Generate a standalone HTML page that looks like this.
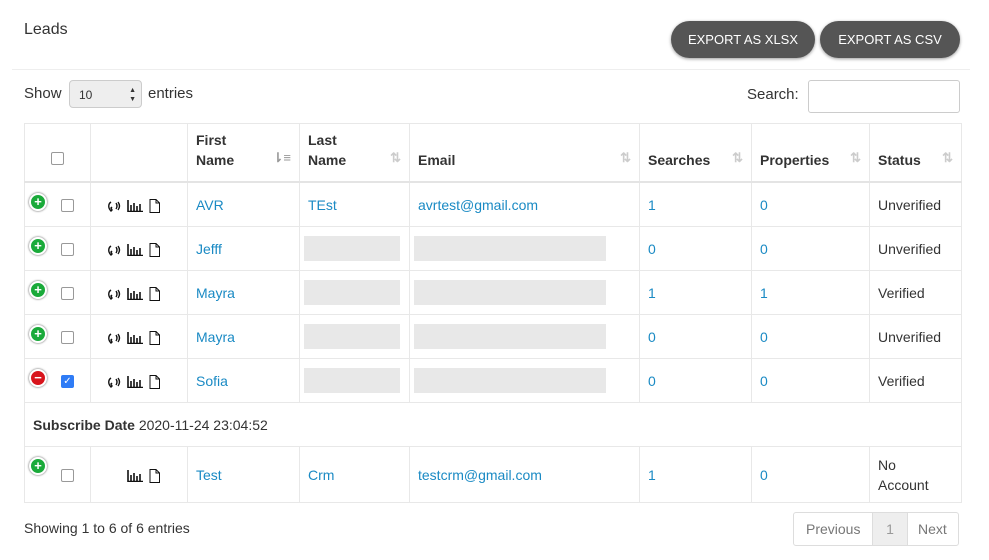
<!DOCTYPE html>
<html><head><style>
body{margin:0;background:#fff;font-family:"Liberation Sans",Arial,sans-serif;color:#333;width:989px;height:560px;overflow:hidden;position:relative}
.a{position:absolute}
.btn{position:absolute;top:21px;height:37px;border-radius:19px;background:#555;color:#fff;font-size:13px;line-height:37px;text-align:center;box-shadow:0 1px 3px rgba(0,0,0,.4)}
table{position:absolute;left:24px;top:123px;border-collapse:collapse;table-layout:fixed;font-size:14px}
td,th{border:1px solid #e8e8e8;padding:0 8px;vertical-align:middle;text-align:left}
th{font-weight:bold;color:#333;height:43px;padding-bottom:11px;vertical-align:bottom;line-height:20px;border-bottom:2px solid #e4e4e4;position:relative}
td{height:43px}
a{color:#1a8ac4;text-decoration:none}
.cb{display:inline-block;width:11px;height:11px;border:1px solid #999;border-radius:2px;background:#fff;vertical-align:middle}
.cbk{background:#2f7cf6;border-color:#2f7cf6;color:#fff;font-size:10px;line-height:11px;text-align:center}
.pl{position:absolute;left:4px;top:10px;width:14px;height:14px;border-radius:50%;border:2px solid #fff;box-shadow:0 0 2px #555;color:#fff;font-size:13px;line-height:13px;text-align:center;font-weight:bold}
.g{background:#1aaa3a}.r{background:#d8141c}
.gr{display:inline-block;background:#e8e8e8;height:25px;vertical-align:middle}
.srt{position:absolute;right:8px;bottom:13px;color:#ccc;font-size:13px}
svg{vertical-align:middle;margin-right:6px}
</style></head><body>
<div class="a" style="left:24px;top:21px;font-size:16px">Leads</div>
<div class="btn" style="left:671px;width:144px">EXPORT AS XLSX</div>
<div class="btn" style="left:820px;width:140px">EXPORT AS CSV</div>
<div class="a" style="left:12px;top:69px;width:958px;border-top:1px solid #eee"></div>
<div class="a" style="left:24px;top:85px;font-size:15px">Show</div>
<div class="a" style="left:69px;top:80px;width:73px;height:28px;border:1px solid #ccc;border-radius:4px;background:#eee;font-size:12px;line-height:28px;box-sizing:border-box;padding-left:9px">10<span style="position:absolute;right:5px;top:0;font-size:7px;line-height:9px;padding-top:5px">&#9650;<br>&#9660;</span></div>
<div class="a" style="left:148px;top:85px;font-size:15px">entries</div>
<div class="a" style="left:747px;top:86px;font-size:15px">Search:</div>
<div class="a" style="left:808px;top:80px;width:152px;height:33px;border:1px solid #ccc;border-radius:3px;box-sizing:border-box"></div>
<table>
<colgroup><col style="width:66px"><col style="width:97px"><col style="width:112px"><col style="width:110px"><col style="width:230px"><col style="width:112px"><col style="width:118px"><col style="width:92px"></colgroup>
<tr><th style="text-align:center;padding-bottom:14px"><span class="cb"></span></th><th></th><th>First<br>Name<span class="srt" style="color:#999">⇂≡</span></th><th>Last<br>Name<span class="srt">⇅</span></th><th>Email<span class="srt">⇅</span></th><th>Searches<span class="srt">⇅</span></th><th>Properties<span class="srt">⇅</span></th><th>Status<span class="srt">⇅</span></th></tr>
<tr><td style="position:relative;padding-left:36px"><span class="pl g">+</span><span class="cb"></span></td><td style="padding-left:16px"><svg width="14" height="12"><path d="M4 2c-3 2-3 6 0 9l1-1-1-2 1-1M9 3q2 3 0 6M11 2q3 4 0 8" stroke="#111" fill="none" stroke-width="1.4"/></svg><svg width="16" height="12"><path d="M1 0v11.5h15M4 5v6M7 3v8M10 6v5M13 4v7" stroke="#111" stroke-width="1.6" fill="none"/></svg><svg width="11" height="14"><path d="M1 .5h6l3.5 3.5v9.5h-9.5zM7 .5v3.5h3.5" stroke="#111" fill="none"/></svg></td><td><a>AVR</a></td><td><a>TEst</a></td><td><a>avrtest@gmail.com</a></td><td><a>1</a></td><td><a>0</a></td><td>Unverified</td></tr>
<tr><td style="position:relative;padding-left:36px"><span class="pl g">+</span><span class="cb"></span></td><td style="padding-left:16px"><svg width="14" height="12"><path d="M4 2c-3 2-3 6 0 9l1-1-1-2 1-1M9 3q2 3 0 6M11 2q3 4 0 8" stroke="#111" fill="none" stroke-width="1.4"/></svg><svg width="16" height="12"><path d="M1 0v11.5h15M4 5v6M7 3v8M10 6v5M13 4v7" stroke="#111" stroke-width="1.6" fill="none"/></svg><svg width="11" height="14"><path d="M1 .5h6l3.5 3.5v9.5h-9.5zM7 .5v3.5h3.5" stroke="#111" fill="none"/></svg></td><td><a>Jefff</a></td><td style="padding:0 4px"><span class="gr" style="width:96px"></span></td><td style="padding:0 4px"><span class="gr" style="width:192px"></span></td><td><a>0</a></td><td><a>0</a></td><td>Unverified</td></tr>
<tr><td style="position:relative;padding-left:36px"><span class="pl g">+</span><span class="cb"></span></td><td style="padding-left:16px"><svg width="14" height="12"><path d="M4 2c-3 2-3 6 0 9l1-1-1-2 1-1M9 3q2 3 0 6M11 2q3 4 0 8" stroke="#111" fill="none" stroke-width="1.4"/></svg><svg width="16" height="12"><path d="M1 0v11.5h15M4 5v6M7 3v8M10 6v5M13 4v7" stroke="#111" stroke-width="1.6" fill="none"/></svg><svg width="11" height="14"><path d="M1 .5h6l3.5 3.5v9.5h-9.5zM7 .5v3.5h3.5" stroke="#111" fill="none"/></svg></td><td><a>Mayra</a></td><td style="padding:0 4px"><span class="gr" style="width:96px"></span></td><td style="padding:0 4px"><span class="gr" style="width:192px"></span></td><td><a>1</a></td><td><a>1</a></td><td>Verified</td></tr>
<tr><td style="position:relative;padding-left:36px"><span class="pl g">+</span><span class="cb"></span></td><td style="padding-left:16px"><svg width="14" height="12"><path d="M4 2c-3 2-3 6 0 9l1-1-1-2 1-1M9 3q2 3 0 6M11 2q3 4 0 8" stroke="#111" fill="none" stroke-width="1.4"/></svg><svg width="16" height="12"><path d="M1 0v11.5h15M4 5v6M7 3v8M10 6v5M13 4v7" stroke="#111" stroke-width="1.6" fill="none"/></svg><svg width="11" height="14"><path d="M1 .5h6l3.5 3.5v9.5h-9.5zM7 .5v3.5h3.5" stroke="#111" fill="none"/></svg></td><td><a>Mayra</a></td><td style="padding:0 4px"><span class="gr" style="width:96px"></span></td><td style="padding:0 4px"><span class="gr" style="width:192px"></span></td><td><a>0</a></td><td><a>0</a></td><td>Unverified</td></tr>
<tr><td style="position:relative;padding-left:36px"><span class="pl r">−</span><span class="cb cbk">✓</span></td><td style="padding-left:16px"><svg width="14" height="12"><path d="M4 2c-3 2-3 6 0 9l1-1-1-2 1-1M9 3q2 3 0 6M11 2q3 4 0 8" stroke="#111" fill="none" stroke-width="1.4"/></svg><svg width="16" height="12"><path d="M1 0v11.5h15M4 5v6M7 3v8M10 6v5M13 4v7" stroke="#111" stroke-width="1.6" fill="none"/></svg><svg width="11" height="14"><path d="M1 .5h6l3.5 3.5v9.5h-9.5zM7 .5v3.5h3.5" stroke="#111" fill="none"/></svg></td><td><a>Sofia</a></td><td style="padding:0 4px"><span class="gr" style="width:96px"></span></td><td style="padding:0 4px"><span class="gr" style="width:192px"></span></td><td><a>0</a></td><td><a>0</a></td><td>Verified</td></tr>
<tr><td colspan="8" style="padding-left:8px"><b>Subscribe Date</b> 2020-11-24 23:04:52</td></tr>
<tr><td style="position:relative;padding-left:36px;height:55px"><span class="pl g">+</span><span class="cb"></span></td><td style="padding-left:36px"><svg width="16" height="12"><path d="M1 0v11.5h15M4 5v6M7 3v8M10 6v5M13 4v7" stroke="#111" stroke-width="1.6" fill="none"/></svg><svg width="11" height="14"><path d="M1 .5h6l3.5 3.5v9.5h-9.5zM7 .5v3.5h3.5" stroke="#111" fill="none"/></svg></td><td><a>Test</a></td><td><a>Crm</a></td><td><a>testcrm@gmail.com</a></td><td><a>1</a></td><td><a>0</a></td><td style="line-height:20px">No<br>Account</td></tr>
</table>
<div class="a" style="left:24px;top:520px;font-size:14px">Showing 1 to 6 of 6 entries</div>
<div class="a" style="left:793px;top:512px;width:166px;height:34px;border:1px solid #ddd;border-radius:3px;box-sizing:border-box;font-size:14px;color:#777;line-height:32px">
<span class="a" style="left:12px">Previous</span><span class="a" style="left:78px;width:34px;height:32px;background:#eee;border-left:1px solid #ddd;border-right:1px solid #ddd;text-align:center;color:#999">1</span><span class="a" style="left:124px">Next</span></div>
</body></html>
